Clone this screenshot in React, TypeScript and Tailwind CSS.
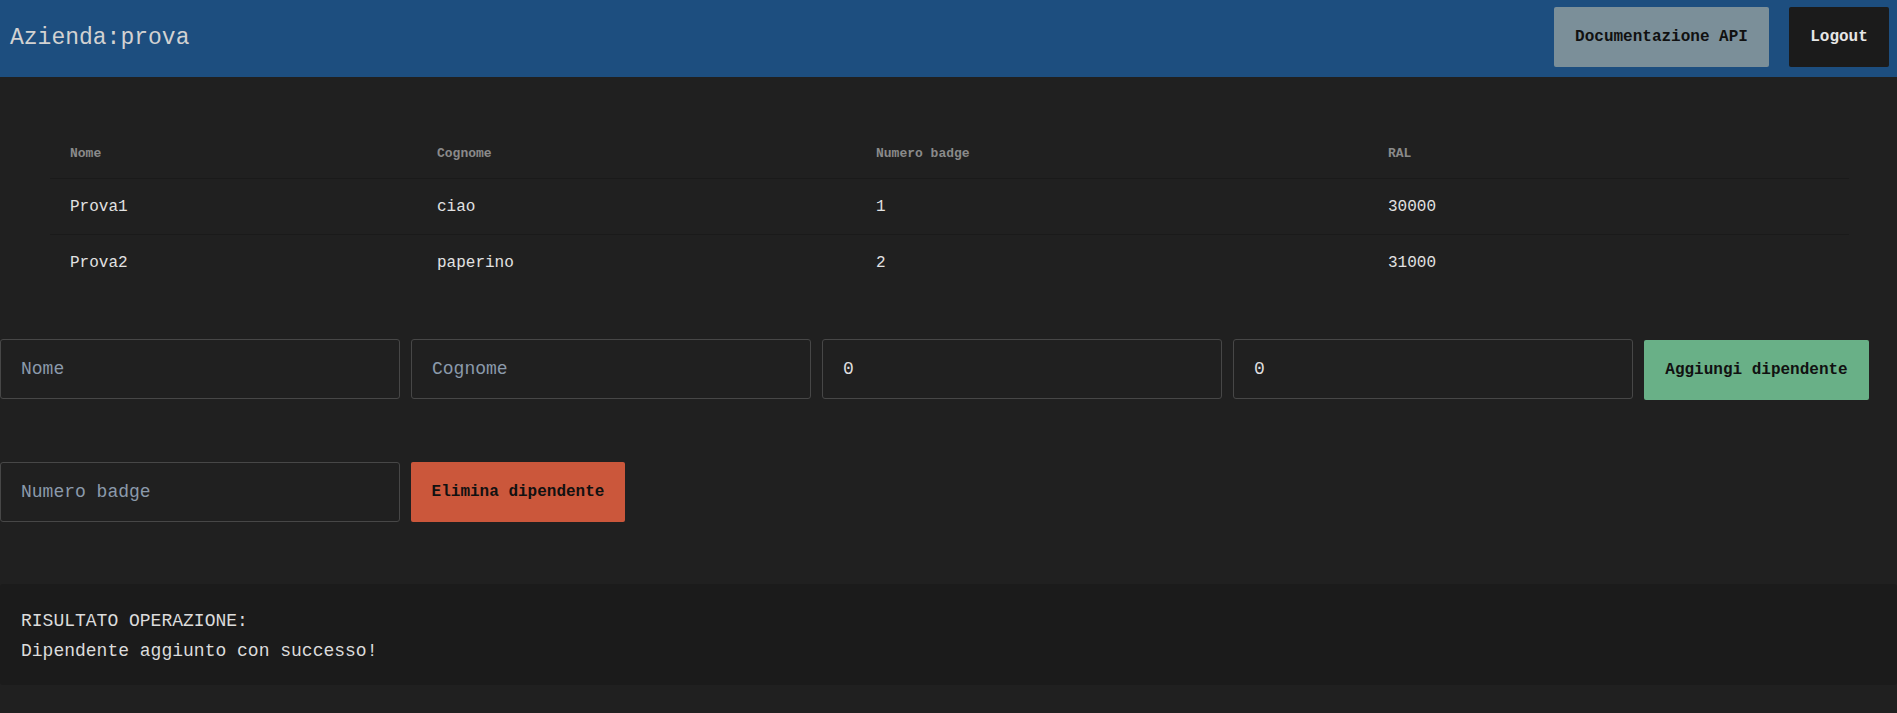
export default function App() {
  const mono = "font-['Liberation_Mono',monospace]";
  const rows = [
    { nome: "Prova1", cognome: "ciao", badge: "1", ral: "30000" },
    { nome: "Prova2", cognome: "paperino", badge: "2", ral: "31000" },
  ];

  return (
    <div className={`min-h-[713px] bg-[#202020] ${mono}`}>
      <header className="h-[77px] bg-[#1d4e7f] flex items-start justify-between pl-[10px] pr-[8px]">
        <h1 className="mt-[24px] text-[23px] leading-[28px] text-[#d2d2d2]">Azienda:prova</h1>
        <div className="flex gap-[20px] pt-[7px]">
          <button className="h-[60px] w-[215px] rounded-[2px] bg-[#7b8f99] text-[16px] font-bold text-[#111]">
            Documentazione API
          </button>
          <button className="h-[60px] w-[100px] rounded-[2px] bg-[#1b1b1b] text-[16px] font-bold text-[#e6e6e6]">
            Logout
          </button>
        </div>
      </header>

      <table className="mt-[45px] ml-[50px] w-[1799px] border-collapse text-left">
        <thead>
          <tr className="h-[56px] border-b border-[#1a1a1a]">
            <th className="w-[367px] pl-[20px] pt-[7px] text-[13px] font-bold text-[#8a8a8a]">Nome</th>
            <th className="w-[439px] pl-[20px] pt-[7px] text-[13px] font-bold text-[#8a8a8a]">Cognome</th>
            <th className="w-[512px] pl-[20px] pt-[7px] text-[13px] font-bold text-[#8a8a8a]">Numero badge</th>
            <th className="pl-[20px] pt-[7px] text-[13px] font-bold text-[#8a8a8a]">RAL</th>
          </tr>
        </thead>
        <tbody>
          {rows.map((r, i) => (
            <tr key={r.badge} className={`h-[56px] ${i === 0 ? "border-b border-[#1a1a1a]" : ""}`}>
              <td className="pl-[20px] pt-[2px] text-[16px] text-[#e2e2e2]">{r.nome}</td>
              <td className="pl-[20px] pt-[2px] text-[16px] text-[#e2e2e2]">{r.cognome}</td>
              <td className="pl-[20px] pt-[2px] text-[16px] text-[#e2e2e2]">{r.badge}</td>
              <td className="pl-[20px] pt-[2px] text-[16px] text-[#e2e2e2]">{r.ral}</td>
            </tr>
          ))}
        </tbody>
      </table>

      {/* aggiungi */}
      <div className="mt-[49px] flex items-start gap-[11px]">
        <input className="h-[60px] w-[400px] rounded-[3px] border border-[#474747] bg-transparent px-[20px] text-[18px] text-[#e2e2e2] placeholder:text-[#8b9aab] outline-none" placeholder="Nome" />
        <input className="h-[60px] w-[400px] rounded-[3px] border border-[#474747] bg-transparent px-[20px] text-[18px] text-[#e2e2e2] placeholder:text-[#8b9aab] outline-none" placeholder="Cognome" />
        <input className="h-[60px] w-[400px] rounded-[3px] border border-[#474747] bg-transparent px-[20px] text-[18px] text-[#dedede] outline-none" defaultValue="0" />
        <input className="h-[60px] w-[400px] rounded-[3px] border border-[#474747] bg-transparent px-[20px] text-[18px] text-[#dedede] outline-none" defaultValue="0" />
        <button className="mt-[1px] h-[60px] w-[225px] rounded-[2px] bg-[#69b087] text-[16px] font-bold text-[#111]">
          Aggiungi dipendente
        </button>
      </div>

      {/* elimina */}
      <div className="mt-[62px] flex items-start gap-[11px]">
        <input className="h-[60px] w-[400px] rounded-[3px] border border-[#474747] bg-transparent px-[20px] text-[18px] text-[#e2e2e2] placeholder:text-[#8b9aab] outline-none" placeholder="Numero badge" />
        <button className="h-[60px] w-[214px] rounded-[2px] bg-[#cb573b] text-[16px] font-bold text-[#111]">
          Elimina dipendente
        </button>
      </div>

      <div className="mt-[62px] rounded-[3px] bg-[#1b1b1b] pl-[21px] pt-[22px] pb-[19px] text-[18px] leading-[30px] text-[#dcdcdc]">
        <p>RISULTATO OPERAZIONE:</p>
        <p>Dipendente aggiunto con successo!</p>
      </div>
    </div>
  );
}
